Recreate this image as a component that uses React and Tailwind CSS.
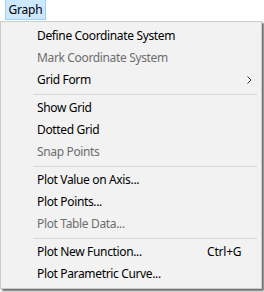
import React from "react";

const font = { fontFamily: '"Segoe UI", "Noto Sans", "Open Sans", sans-serif' };

function Item({ label, disabled, shortcut, submenu }) {
  return (
    <div
      className={`h-[22px] flex items-center pl-[36px] pr-[9px] text-[12px] ${
        disabled ? "text-[#6d6d6d]" : "text-black"
      }`}
    >
      <span className="flex-1 whitespace-nowrap tracking-[-0.35px]">{label}</span>
      {shortcut && <span className="w-[45px] whitespace-nowrap tracking-[-0.2px]">{shortcut}</span>}
      {submenu && (
        <svg width="5" height="8" viewBox="0 0 5 8">
          <path d="M0.5 0.5 L4 4 L0.5 7.5" fill="none" stroke="#333" strokeWidth="1" />
        </svg>
      )}
    </div>
  );
}

function Sep() {
  return (
    <div className="h-[6px] flex items-center pl-[32px] pr-[4px]">
      <div className="h-px flex-1 bg-[#d7d7d7]" />
    </div>
  );
}

export default function App() {
  return (
    <div className="w-[264px] h-[292px] bg-white overflow-hidden" style={font}>
      <div className="h-[21px] flex items-start">
        <div className="ml-[5px] h-[20px] w-[41px] bg-[#cce8ff] border border-t-0 border-[#99d1ff] flex items-center justify-center text-[12px] text-black tracking-[-0.2px]">
          Graph
        </div>
      </div>
      <div className="w-[262px] bg-[#f2f2f2] border border-[#cccccc] py-[3px] shadow-[2px_2px_2px_rgba(0,0,0,0.6)]">
        <Item label="Define Coordinate System" />
        <Item label="Mark Coordinate System" disabled />
        <Item label="Grid Form" submenu />
        <Sep />
        <Item label="Show Grid" />
        <Item label="Dotted Grid" />
        <Item label="Snap Points" disabled />
        <Sep />
        <Item label="Plot Value on Axis..." />
        <Item label="Plot Points..." />
        <Item label="Plot Table Data..." disabled />
        <Sep />
        <Item label="Plot New Function..." shortcut="Ctrl+G" />
        <Item label="Plot Parametric Curve..." />
      </div>
    </div>
  );
}
